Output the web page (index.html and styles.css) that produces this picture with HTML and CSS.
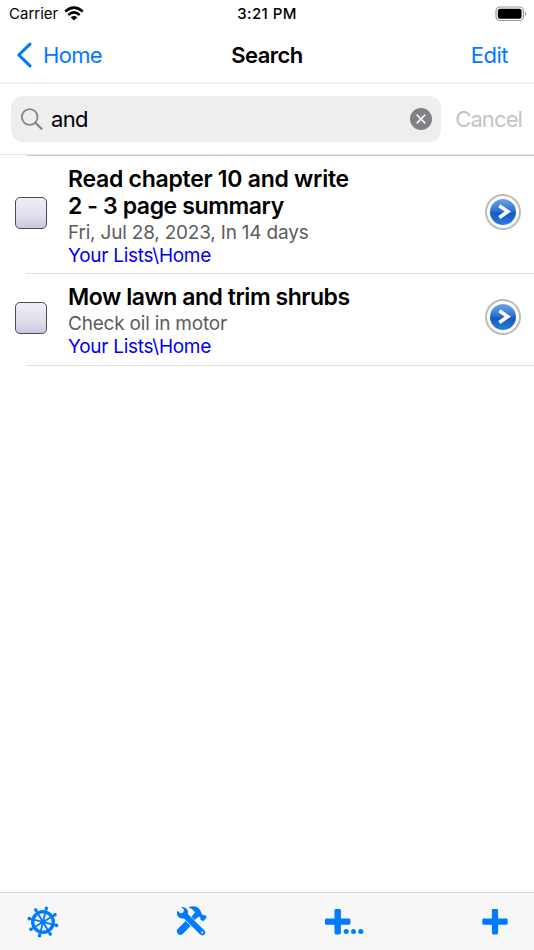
FILE: index.html
```html
<!DOCTYPE html>
<html lang="en">
<head>
    <meta charset="UTF-8">
    <title>Search</title>
    <link rel="stylesheet" href="styles.css">
</head>
<body>
    <div id="container">
        <div class="status">
            <div class="carrier">
                <span>Carrier</span>
                <svg width="20" height="15" viewBox="0 0 20 15">
                    <g fill="none" stroke="#000" stroke-width="2.6">
                        <path d="M1.2 5.5Q10 -2.3 18.8 5.5"/>
                        <path d="M4.3 8.9Q10 3.9 15.7 8.9"/>
                    </g>
                    <path d="M6.7 11.2Q10 8.6 13.3 11.2L10 14.6Z"/>
                </svg>
            </div>
            <span class="time">3:21 PM</span>
            <svg class="battery" width="32" height="16" viewBox="0 0 32 16">
                <rect x="1" y="1" width="27.5" height="13.5" rx="4" fill="none" stroke="#999" stroke-width="1.2"/>
                <rect x="2.8" y="2.8" width="23.8" height="9.9" rx="2.2"/>
                <path d="M30 5.5Q32.5 7.8 30 10Z" fill="#999"/>
            </svg>
        </div>
        <div class="nav">
            <a class="back">
                <svg width="17" height="26" viewBox="0 0 17 26">
                    <path d="M14 2.2L2.8 13L14 23.8" fill="none" stroke="#007aff" stroke-width="3.1" stroke-linecap="round" stroke-linejoin="round"/>
                </svg>
                <span>Home</span>
            </a>
            <h1>Search</h1>
            <a class="edit">Edit</a>
        </div>
        <div class="search">
            <div class="field">
                <svg width="23" height="23" viewBox="0 0 23 23" fill="none" stroke="#858589">
                    <circle cx="8.7" cy="9" r="7.8" stroke-width="1.8"/>
                    <path d="M14.4 14.7L20.5 20.8" stroke-width="2.3" stroke-linecap="round"/>
                </svg>
                <span class="query">and</span>
                <svg width="22" height="22" viewBox="0 0 22 22">
                    <circle cx="11" cy="11" r="11" fill="#818185"/>
                    <path d="M7.2 7.2L14.8 14.8M14.8 7.2L7.2 14.8" stroke="#f2f2f2" stroke-width="1.8" stroke-linecap="round"/>
                </svg>
            </div>
            <span class="cancel">Cancel</span>
        </div>
        <ul id="list">
            <li class="first">
                <span class="check"></span>
                <div class="item">
                    <h2><span class="line1">Read chapter 10 and write</span><br><span class="line2">2 - 3 page summary</span></h2>
                    <p class="note">Fri, Jul 28, 2023, In 14 days</p>
                    <p class="path">Your Lists\Home</p>
                </div>
                <span class="go">
                    <svg width="26" height="26" viewBox="0 0 26 26">
                        <path d="M9.3 6.8L17.8 12.6L9.3 18.4" fill="none" stroke="#fff" stroke-width="3.6"/>
                    </svg>
                </span>
            </li>
            <li>
                <span class="check"></span>
                <div class="item">
                    <h2><span class="line3">Mow lawn and trim shrubs</span></h2>
                    <p class="note">Check oil in motor</p>
                    <p class="path">Your Lists\Home</p>
                </div>
                <span class="go">
                    <svg width="26" height="26" viewBox="0 0 26 26">
                        <path d="M9.3 6.8L17.8 12.6L9.3 18.4" fill="none" stroke="#fff" stroke-width="3.6"/>
                    </svg>
                </span>
            </li>
        </ul>
        <div class="toolbar">
            <svg width="32" height="32" viewBox="-16 -16 32 32" fill="none" stroke="#007aff">
                <circle r="10.3" stroke-width="3.3"/>
                <g transform="rotate(14)" stroke-width="1.9">
                    <path d="M0 -14V14M-14 0H14M-9.9 -9.9L9.9 9.9M9.9 -9.9L-9.9 9.9"/>
                    <g fill="#007aff" stroke="none">
                        <circle r="2.7"/>
                        <circle cy="-14" r="1.8"/>
                        <circle cy="14" r="1.8"/>
                        <circle cx="-14" r="1.8"/>
                        <circle cx="14" r="1.8"/>
                        <circle cx="-9.9" cy="-9.9" r="1.8"/>
                        <circle cx="9.9" cy="-9.9" r="1.8"/>
                        <circle cx="-9.9" cy="9.9" r="1.8"/>
                        <circle cx="9.9" cy="9.9" r="1.8"/>
                    </g>
                </g>
            </svg>
            <svg width="32" height="32" viewBox="0 0 32 32" fill="#007aff">
                <path d="M1.3 4.4L4.2 7.3L7.3 6.6L8 3.5L5 1.2Q9.3 .6 11.3 3.6Q12.5 5.7 11.8 8L28.5 24.6Q30.3 27 28.2 28.8Q26 30.3 24 28.3L8 12.4Q4.8 13.2 2.5 11Q.2 8.4 1.3 4.4Z"/>
                <path d="M12.5 1.5Q17.5 -.8 21.7 1.6Q25 3.8 25.9 8.2L28 9.6L29.1 8.7L30.6 11.6L27.3 15.2L24.2 13.6L24.6 11.8L22.7 10.6L20.3 12.8L16.5 9.2L18.9 6.7Q17.7 3.2 12.5 1.5Z"/>
                <path d="M16.8 9.3L20.2 12.7L18.6 14.2L15.3 10.8Z"/>
                <path d="M9.6 14.9L14.7 20L6.4 28.3Q4.2 30 2 28Q-.1 25.7 1.4 23.3Z"/>
                <circle cx="26.2" cy="26.5" r="1" fill="#f7f7f7"/>
            </svg>
            <svg width="40" height="28" viewBox="0 0 40 28" fill="#007aff">
                <rect x="10.5" y="1" width="6.4" height="25.4" rx="1.4"/>
                <rect x="1" y="10.5" width="25.4" height="6.2" rx="1.4"/>
                <circle cx="22.2" cy="23.6" r="2.5"/>
                <circle cx="29.5" cy="23.6" r="2.5"/>
                <circle cx="36.8" cy="23.6" r="2.5"/>
            </svg>
            <svg width="28" height="28" viewBox="0 0 28 28" fill="#007aff">
                <rect x="10.9" y="1" width="6.2" height="25.4" rx="1.4"/>
                <rect x="1.3" y="10.5" width="25.4" height="6.2" rx="1.4"/>
            </svg>
        </div>
    </div>
</body>
</html>
```

FILE: styles.css
```css
*{
    margin: 0;
    padding: 0;
    box-sizing: border-box;
}
body{
    font-family: Inter, "Liberation Sans", sans-serif;
    background: #fff;
    color: #000;
}
ul{
    list-style: none;
}
#container{
    width: 534px;
    height: 950px;
    display: flex;
    flex-direction: column;
    white-space: nowrap;
}
.status{
    height: 28px;
    display: grid;
    grid-template-columns: 1fr auto 1fr;
    padding: 0 8px 1px;
    align-items: center;
    font-size: 15px;
}
.carrier{
    display: flex;
    align-items: center;
    gap: 6px;
    padding-left: 1px;
}
.time{
    font-weight: 500;
    letter-spacing: 0.4px;
}
.battery{
    justify-self: end;
    margin-right: -1px;
}
.nav{
    height: 56px;
    display: grid;
    grid-template-columns: 1fr auto 1fr;
    align-items: center;
    padding: 0 16px 1px;
    border-bottom: 2px solid #efefef;
    font-size: 22px;
    letter-spacing: -0.7px;
}
.nav h1{
    font-size: 22px;
    font-weight: 600;
    letter-spacing: -0.5px;
}
.back{
    display: flex;
    align-items: center;
    gap: 10px;
    color: #007aff;
}
.edit{
    justify-self: end;
    margin-right: 10px;
    letter-spacing: -0.5px;
    color: #007aff;
}
.search{
    height: 71px;
    display: flex;
    align-items: center;
    padding: 0 12px 0 11px;
    justify-content: space-between;
    border-bottom: 1px solid #e6e6e6;
    font-size: 22px;
}
.field{
    width: 430px;
    height: 46px;
    display: flex;
    align-items: center;
    padding: 0 9px 0 10px;
    background: #eee;
    border-radius: 12px;
}
.query{
    flex: 1;
    margin-left: 7px;
    letter-spacing: -0.7px;
}
.cancel{
    padding-bottom: 1px;
    color: #c4c4c6;
    letter-spacing: -0.9px;
}
#list{
    flex: 1;
}
#list li{
    height: 92px;
    display: flex;
    align-items: center;
    margin-left: 26px;
    padding: 0 13px 3px 0;
    border-bottom: 1px solid #e0e0e0;
}
#list .first{
    height: 119px;
    border-top: 1px solid #ccc;
}
.check{
    width: 32px;
    height: 32px;
    margin-left: -11px;
    margin-right: 21px;
    border: 1.5px solid #4c4c50;
    border-radius: 5px;
    background: linear-gradient(#f0eff8, #dcdbea 70%, #c8c6df);
}
.item{
    flex: 1;
    padding-top: 6px;
}
.item h2{
    font-size: 23px;
    line-height: 27.5px;
    font-weight: 600;
}
.line1{
    letter-spacing: -0.27px;
}
.line2{
    letter-spacing: -0.4px;
}
.line3{
    letter-spacing: -0.46px;
}
.note{
    font-size: 19px;
    line-height: 24px;
    letter-spacing: -0.2px;
    color: #5c5c5c;
}
.path{
    font-size: 19px;
    line-height: 22px;
    letter-spacing: -0.28px;
    color: #0000f5;
}
.go{
    width: 36px;
    height: 36px;
    display: flex;
    align-items: center;
    justify-content: center;
    margin-bottom: 2px;
    border: 2px solid #bcbcbc;
    border-radius: 50%;
}
.go svg{
    border-radius: 50%;
    background: linear-gradient(#6ba5e8, #2e72d4 45%, #1458c0 55%, #2a7ee0);
}
.toolbar{
    height: 58px;
    display: flex;
    align-items: center;
    justify-content: space-between;
    padding: 0 25px 0 27px;
    background: #f7f7f7;
    border-top: 1px solid #d8d8d8;
}
```
